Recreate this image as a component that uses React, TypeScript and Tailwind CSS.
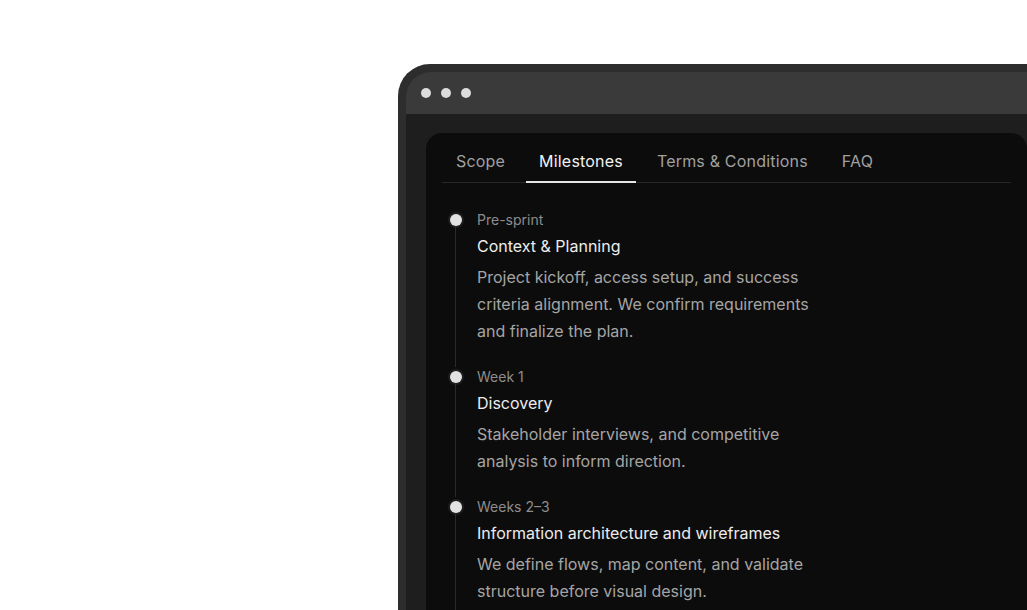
import { useState } from 'react';

const tabs = ['Scope', 'Milestones', 'Terms & Conditions', 'FAQ'];

const milestones = [
    {
        when: 'Pre-sprint',
        title: 'Context & Planning',
        body: 'Project kickoff, access setup, and success criteria alignment. We confirm requirements and finalize the plan.',
    },
    {
        when: 'Week 1',
        title: 'Discovery',
        body: 'Stakeholder interviews, and competitive analysis to inform direction.',
    },
    {
        when: 'Weeks 2–3',
        title: 'Information architecture and wireframes',
        body: 'We define flows, map content, and validate structure before visual design.',
    },
];

export default function App() {
    const [active, setActive] = useState('Milestones');

    return (
        <div
            className="h-[610px] w-[1027px] overflow-hidden bg-white pl-[398px] pt-[64px]"
            style={{ fontFamily: 'Inter, "Noto Sans", sans-serif' }}
        >
            {/* window frame */}
            <div className="w-[660px] rounded-tl-[32px] bg-[#2d2d2d] pl-2 pt-2">
                <div className="overflow-hidden rounded-tl-[25px]">
                    <div className="flex h-[42px] items-center gap-[10px] bg-[#3a3a3a] pl-[15px]">
                        <span className="h-[10px] w-[10px] rounded-full bg-[#dcdcdc]"></span>
                        <span className="h-[10px] w-[10px] rounded-full bg-[#dcdcdc]"></span>
                        <span className="h-[10px] w-[10px] rounded-full bg-[#dcdcdc]"></span>
                    </div>

                    <div className="bg-[#1e1e1e] pl-5 pt-[19px] pr-5">
                        <div className="w-[601px] rounded-[16px] bg-[#0c0c0c] px-4 pb-10">
                            <div className="flex gap-2 border-b border-[#262626] pl-px">
                                {tabs.map((tab) => (
                                    <button
                                        key={tab}
                                        onClick={() => setActive(tab)}
                                        className={`-mb-px border-b-2 px-[13px] pt-4 pb-2 text-base leading-6 tracking-[0.012em] ${
                                            active === tab
                                                ? 'border-[#e6e6e6] text-[#f2f2f2]'
                                                : 'border-transparent text-[#a0a0a0]'
                                        }`}
                                    >
                                        {tab}
                                    </button>
                                ))}
                            </div>

                            <div className="pt-[27px]">
                                {milestones.map((m) => (
                                    <div key={m.when} className="flex">
                                        <div className="flex w-[27px] flex-col items-center pt-1">
                                            <span className="h-3 w-3 shrink-0 rounded-full bg-[#e2e2e2] shadow-[0_0_0_2px_rgba(255,255,255,0.07)]"></span>
                                            <span className="w-px flex-1 bg-[#2a2a2a]"></span>
                                        </div>
                                        <div className="ml-2 max-w-[340px] pb-[22px]">
                                            <p className="text-sm leading-5 text-[#8d8d8d]">{m.when}</p>
                                            <p className="mt-[4px] text-base leading-6 text-[#ececec]">{m.title}</p>
                                            <p className="mt-[6px] text-base leading-[27px] text-[#a5a5a5]">{m.body}</p>
                                        </div>
                                    </div>
                                ))}
                            </div>
                        </div>
                    </div>
                </div>
            </div>
        </div>
    );
}
